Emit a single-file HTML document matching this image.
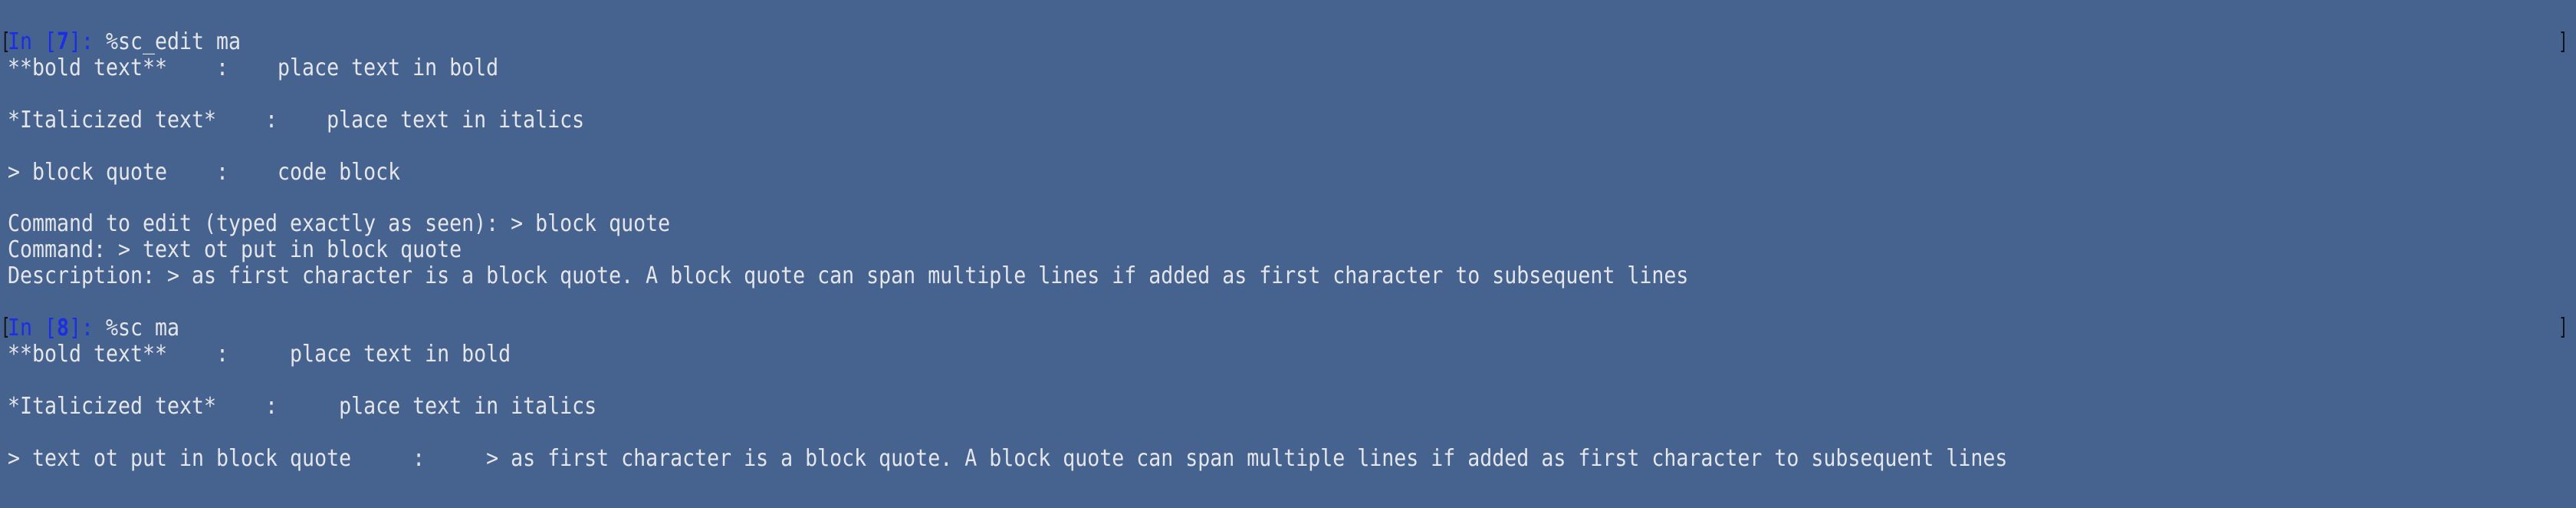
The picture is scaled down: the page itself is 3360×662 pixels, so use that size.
<!DOCTYPE html>
<html><head><meta charset="utf-8"><style>
html,body{margin:0;padding:0;}
body{width:3360px;height:662px;background:#46628f;overflow:hidden;position:relative;}
pre{position:absolute;left:10px;top:38px;margin:0;font-family:"DejaVu Sans Mono","Liberation Mono",monospace;font-size:30px;line-height:33.9px;color:#e4e6ea;transform:scaleX(0.886);transform-origin:0 0;white-space:pre;}
.b{color:#1a2ee6}.bb{color:#1a2ee6;font-weight:bold}
.br{position:absolute;font-family:"DejaVu Sans Mono",monospace;font-size:30px;color:#0d1018;line-height:33.9px;transform:scaleX(0.7);transform-origin:0 0}
</style></head><body>
<div class="br" style="left:1px;top:38px">[</div>
<div class="br" style="left:1px;top:410px">[</div>
<div class="br" style="left:3337px;top:38px">]</div>
<div class="br" style="left:3337px;top:410px">]</div>
<pre><span class="b">In [</span><span class="bb">7</span><span class="b">]: </span>%sc_edit ma
**bold text**    :    place text in bold

*Italicized text*    :    place text in italics

&gt; block quote    :    code block

Command to edit (typed exactly as seen): &gt; block quote
Command: &gt; text ot put in block quote
Description: &gt; as first character is a block quote. A block quote can span multiple lines if added as first character to subsequent lines

<span class="b">In [</span><span class="bb">8</span><span class="b">]: </span>%sc ma
**bold text**    :     place text in bold

*Italicized text*    :     place text in italics

&gt; text ot put in block quote     :     &gt; as first character is a block quote. A block quote can span multiple lines if added as first character to subsequent lines
</pre>
</body></html>
